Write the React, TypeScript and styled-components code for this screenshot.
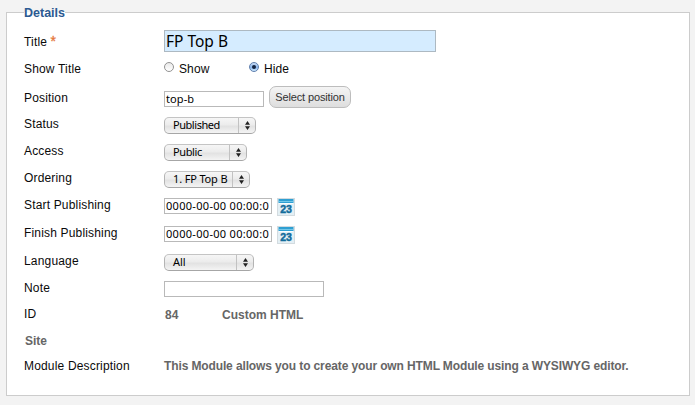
import React from "react";
import styled, { createGlobalStyle } from "styled-components";

const Global = createGlobalStyle`
  html, body { margin: 0; height: 405px; overflow: hidden; background: #f3f3f3; }
  *, *::before, *::after { box-sizing: border-box; }
`;

const Page = styled.main`
  height: 405px;
  padding: 5px 5px 0 6px;
  font: 12px/16px "Liberation Sans", Arial, sans-serif;
  color: #0a0a0a;
`;

const Panel = styled.fieldset`
  margin: 0;
  height: 391px;
  min-width: 0;
  padding: 9px 17px 0 17px;
  border: 1px solid #ccc;
  background: #fff;
`;

const Legend = styled.legend`
  padding: 0;
  height: 15px;
  font-size: 12.5px;
  font-weight: bold;
  color: #2c5a92;
`;

const Row = styled.div<{ $h: number }>`
  display: grid;
  grid-template-columns: 140px 1fr;
  height: ${(p) => p.$h}px;
`;

const Label = styled.label`
  padding-top: 5px;
  white-space: nowrap;
  letter-spacing: 0.17px;
`;

const Star = styled.span`
  color: #e5763a;
  font-size: 14px;
  line-height: 14px;
  -webkit-text-stroke: 0.3px #e5763a;
`;

const Control = styled.div<{ $top: number }>`
  display: flex;
  align-items: flex-start;
  padding-top: ${(p) => p.$top}px;
`;

const Input = styled.input<{ $w: number; $ls?: number }>`
  width: ${(p) => p.$w}px;
  height: 16px;
  margin: 0;
  padding: 0 1px 1px;
  border: 1px solid #b9b9b9;
  border-radius: 0;
  outline: none;
  background: #fff;
  color: #000;
  font: 11px/13px "Noto Sans", "Open Sans", sans-serif;
  letter-spacing: ${(p) => p.$ls ?? 0}px;
`;

const TitleInput = styled(Input)`
  height: 22px;
  padding-bottom: 0;
  border-color: #adb9c2;
  background: #d5ecff;
  font-size: 15.5px;
  line-height: 20px;
`;

const Choice = styled.label`
  display: flex;
  width: 85px;
  height: 16px;
  align-items: flex-start;
  gap: 5px;
`;

const ChoiceText = styled.span`
  letter-spacing: 0.1px;
`;

const Radio = styled.span<{ $on?: boolean }>`
  display: grid;
  place-items: center;
  width: 10px;
  height: 10px;
  margin-top: 1px;
  border: 1px solid ${(p) => (p.$on ? "#5f7fae" : "#929292")};
  border-radius: 50%;
  background: ${(p) => (p.$on ? "linear-gradient(#c9dcf5, #8bb6ec 55%, #d0ebff)" : "linear-gradient(#e9e9e9, #fff)")};
  &::after {
    content: "";
    width: 4px;
    height: 4px;
    border-radius: 50%;
    background: ${(p) => (p.$on ? "#14233f" : "transparent")};
  }
`;

const PositionField = styled.div`
  padding-top: 5px;
  height: 22px;
  display: flex;
`;

const Button = styled.button`
  width: 82px;
  height: 22px;
  margin-left: 5px;
  padding: 0;
  border: 1px solid #bdbdbd;
  border-radius: 7px;
  background: linear-gradient(#f4f4f4, #dedede);
  color: #333;
  font: 11px/19px "Liberation Sans", Arial, sans-serif;
  letter-spacing: -0.13px;
`;

const SelectBox = styled.div<{ $w: number; $ls?: number }>`
  display: flex;
  width: ${(p) => p.$w}px;
  height: 17px;
  padding-left: 8px;
  border: 1px solid #b4b4b4;
  border-top-color: #c4c4c4;
  border-bottom-color: #a6a6a6;
  border-radius: 5px;
  background: linear-gradient(#f6f6f6, #ececec 45%, #e2e2e2 55%, #f4f4f4);
  color: #000;
  font: 11px/13px "Noto Sans", "Open Sans", sans-serif;
  letter-spacing: ${(p) => p.$ls ?? 0}px;
`;

const SelectText = styled.span`
  flex: 1;
  white-space: nowrap;
`;

const Stepper = styled.span`
  display: grid;
  place-items: center;
  width: 17px;
  border-left: 1px solid #c2c2c2;
`;

const Calendar = styled.svg`
  display: block;
  margin-left: 5px;
`;

const Strong = styled.span<{ $w?: number; $ls?: number }>`
  width: ${(p) => (p.$w ? p.$w + "px" : "auto")};
  color: #666;
  font-weight: bold;
  white-space: nowrap;
  letter-spacing: ${(p) => p.$ls ?? 0}px;
`;

const SiteLabel = styled(Strong)`
  padding: 5px 0 0 1px;
`;

const Id = styled(Strong)`
  padding-left: 1px;
`;

function Select({ w, ls, children }: { w: number; ls?: number; children: string }) {
  return (
    <SelectBox $w={w} $ls={ls} role="combobox">
      <SelectText>{children}</SelectText>
      <Stepper>
        <svg width="5" height="9" viewBox="0 0 5 9">
          <path d="M2.5 0 5 3.8H0zM0 5.2h5L2.5 9z" fill="#222" />
        </svg>
      </Stepper>
    </SelectBox>
  );
}

function CalendarIcon() {
  return (
    <Calendar width="18" height="18" viewBox="0 0 18 18">
      <rect x="0.5" y="0.5" width="17" height="17" fill="#e3eff5" stroke="#d3dbdf" />
      <rect x="2" y="5" width="14" height="1" fill="#fafdff" />
      <rect x="1.5" y="1" width="15" height="4" fill="#2f9fd2" />
      <rect x="2" y="3" width="14" height="1" fill="#73c8e9" />
      <text x="3.2" y="15.2" textLength="11.8" lengthAdjust="spacingAndGlyphs" fontFamily="Liberation Sans, Arial, sans-serif" fontWeight="bold" fontSize="10" fill="#126c9b" stroke="#126c9b" strokeWidth="0.4">23</text>
    </Calendar>
  );
}

export default function App() {
  return (
    <>
      <Global />
      <Page>
        <Panel>
          <Legend>Details</Legend>
          <Row $h={27}>
            <Label>Title <Star>*</Star></Label>
            <Control $top={1}><TitleInput $w={272} defaultValue="FP Top B" /></Control>
          </Row>
          <Row $h={29}>
            <Label>Show Title</Label>
            <Control $top={5}>
              <Choice><Radio /><ChoiceText>Show</ChoiceText></Choice>
              <Choice><Radio $on /><ChoiceText>Hide</ChoiceText></Choice>
            </Control>
          </Row>
          <Row $h={26}>
            <Label>Position</Label>
            <Control $top={1}>
              <PositionField><Input $w={100} $ls={0.1} defaultValue="top-b" /></PositionField>
              <Button type="button">Select position</Button>
            </Control>
          </Row>
          <Row $h={27}>
            <Label>Status</Label>
            <Control $top={6}><Select w={92} ls={-0.45}>Published</Select></Control>
          </Row>
          <Row $h={27}>
            <Label>Access</Label>
            <Control $top={6}><Select w={83} ls={-0.4}>Public</Select></Control>
          </Row>
          <Row $h={27}>
            <Label>Ordering</Label>
            <Control $top={6}><Select w={86} ls={-0.15}>1. FP Top B</Select></Control>
          </Row>
          <Row $h={28}>
            <Label>Start Publishing</Label>
            <Control $top={6}><Input $w={108} $ls={0.3} defaultValue="0000-00-00 00:00:0" /><CalendarIcon /></Control>
          </Row>
          <Row $h={28}>
            <Label>Finish Publishing</Label>
            <Control $top={6}><Input $w={108} $ls={0.3} defaultValue="0000-00-00 00:00:0" /><CalendarIcon /></Control>
          </Row>
          <Row $h={27}>
            <Label>Language</Label>
            <Control $top={6}><Select w={90}>All</Select></Control>
          </Row>
          <Row $h={26}>
            <Label>Note</Label>
            <Control $top={6}><Input $w={160} /></Control>
          </Row>
          <Row $h={27}>
            <Label>ID</Label>
            <Control $top={6}><Id $w={58}>84</Id><Strong>Custom HTML</Strong></Control>
          </Row>
          <Row $h={25}>
            <SiteLabel>Site</SiteLabel>
          </Row>
          <Row $h={26}>
            <Label>Module Description</Label>
            <Control $top={5}>
              <Strong $ls={-0.12}>This Module allows you to create your own HTML Module using a WYSIWYG editor.</Strong>
            </Control>
          </Row>
        </Panel>
      </Page>
    </>
  );
}
